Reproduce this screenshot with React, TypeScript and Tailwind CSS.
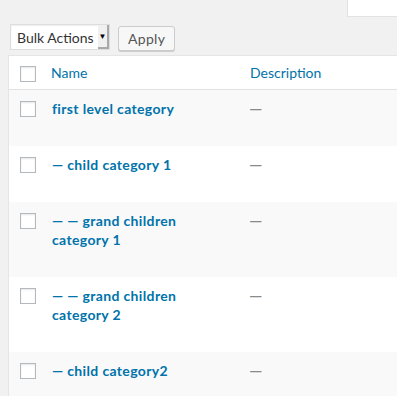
const rows = [
    { name: ["first level category"], alt: true },
    { name: ["— child category 1"], alt: false },
    { name: ["— — grand children", "category 1"], alt: true },
    { name: ["— — grand children", "category 2"], alt: false },
    { name: ["— child category2"], alt: true },
];

function Checkbox() {
    return (
        <span className="block h-4 w-4 border border-[#b4b9be] bg-white shadow-[inset_0_1px_2px_rgba(0,0,0,0.1)]" />
    );
}

export default function App() {
    return (
        <div
            className="relative h-[396px] w-[397px] overflow-hidden bg-[#f1f1f1] text-[14px] text-[#444]"
            style={{ fontFamily: "Lato, 'Liberation Sans', sans-serif" }}
        >
            <div className="flex justify-end">
                <div className="h-[17px] w-[50px] border-b border-l border-[#e2e2e2] bg-white" />
            </div>

            <div className="ml-[10px] mt-[7px] flex items-start gap-2">
                <div className="flex h-[26px] w-[100px] items-stretch border border-[#dddddd] bg-white shadow-[inset_0_1px_2px_rgba(0,0,0,0.07)]">
                    <span className="flex flex-1 items-center pl-[6px] text-[#333]">Bulk Actions</span>
                    <span className="flex w-[11px] items-center justify-center border-b-2 border-r-2 border-[#a9a9a9] bg-[#f0f0f0]">
                        <span className="text-[8px] leading-none text-black">▼</span>
                    </span>
                </div>
                <button className="mt-[2px] h-[25px] rounded-[3px] border border-[#cccccc] bg-[#f7f7f7] px-[9px] leading-none tracking-[0.3px] text-[#555] shadow-[0_1px_0_#cccccc]">
                    Apply
                </button>
            </div>

            <div className="ml-[8px] mt-[4px] w-[420px] border border-r-0 border-[#e5e5e5] bg-white">
                <div className="flex border-b border-[#e1e1e1]">
                    <div className="w-[32px] shrink-0 pl-[11px] pt-[10px]">
                        <Checkbox />
                    </div>
                    <div className="w-[199px] shrink-0 px-[10px] py-[7px] leading-[19px] text-[#0073aa]">
                        Name
                    </div>
                    <div className="px-[10px] py-[7px] leading-[19px] text-[#0073aa]">Description</div>
                </div>

                {rows.map((row, i) => (
                    <div key={i} className={`flex ${row.alt ? "bg-[#f9f9f9]" : "bg-white"}`}>
                        <div className="w-[33px] shrink-0 pl-[11px] pt-[11px]">
                            <Checkbox />
                        </div>
                        <div className="w-[199px] shrink-0 px-[10px] pb-[28px] pt-[9px] font-bold leading-[19px] tracking-[0.35px] text-[#0073aa]">
                            {row.name.map((line, j) => (
                                <div key={j}>{line}</div>
                            ))}
                        </div>
                        <div className="pl-[8px] pt-[9px] text-[17px] leading-[19px] text-[#8a8a8a]">—</div>
                    </div>
                ))}
            </div>
        </div>
    );
}
